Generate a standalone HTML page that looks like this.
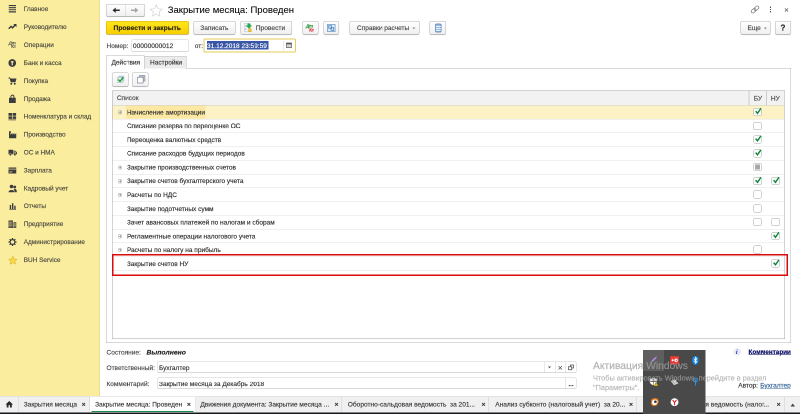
<!DOCTYPE html><html><head><meta charset="utf-8"><title>1C</title><style>
html,body{margin:0;padding:0;background:#fff;overflow:hidden;width:800px;height:414px}
#s{position:absolute;left:0;top:0;width:1600px;height:828px;transform:scale(.5);transform-origin:0 0;font-family:"Liberation Sans",sans-serif;font-size:12.8px;color:#4a4a4a;-webkit-text-stroke:.3px;overflow:hidden;background:#fff;will-change:transform;opacity:.9999}
#s div,#s span,#s svg{position:absolute;box-sizing:border-box;white-space:nowrap}
.sb{left:0;top:0;width:200.300px;height:792px;background:#fbed9e;border-right:2px solid #ecdd92}
.si{left:47.5px;height:16px;line-height:16px;font-size:12.85px;color:#4b4a40}
.btn{border:1.400px solid #b4b4b4;border-bottom-color:#979797;border-radius:3.500px;background:linear-gradient(#ffffff,#f0f0f0);box-shadow:0 1px 1.500px rgba(0,0,0,.16);text-align:center;color:#4a4a4a}
.t{height:16px;line-height:16px}
.inp{border:1px solid #cdcdcd;border-bottom-color:#b8b8b8;border-radius:4px;background:#fff}
.row{left:0;width:1343.500px;height:27.52px;border-bottom:1.500px solid #e1e1e1}
.rt{left:29px;top:5.900px;height:16px;line-height:16px;font-size:13.05px;color:#2e2e2e}
.cb{width:16px;height:16px;border:1.400px solid #a3a3a3;border-radius:2.500px;background:#fff;top:5.200px}
.pl{left:11.200px;top:9.500px;width:8.600px;height:8.600px;border:1px solid #9c9c9c;border-radius:5px}
.pl:before{content:"";position:absolute;left:1px;top:2.800px;width:4.600px;height:1px;background:#7d7d7d}
.pl:after{content:"";position:absolute;left:2.800px;top:1px;width:1px;height:4.600px;background:#7d7d7d}
.bt{height:16px;line-height:16px;top:801.200px;font-size:13.15px;color:#3a3a3a}
.bx{top:801px;height:16px;line-height:16px;font-size:13px;color:#333;font-weight:bold}
.bd{top:794px;width:1px;height:30px;background:#cfcfcf}
</style></head><body><div id="s">
<div class="sb"></div>
<svg style="left:17px;top:10.4px;overflow:visible" width="18" height="17" viewBox="0 0 18 17"><path d="M.500 0h14.500v2.200H.500zM.500 4.200h14.500v2.200H.500zM.500 8.400h14.500v2.200H.500zM.500 12.600h14.500v2.300H.500z" fill="#3c3c3e"/></svg>
<div class="si" style="top:10.4px">Главное</div>
<svg style="left:17px;top:46.2px;overflow:visible" width="18" height="17" viewBox="0 0 18 17"><path d="M0.500 11.500 L5 6.800 L8 9.600 L13 4.500" fill="none" stroke="#3c3c3e" stroke-width="2.900"/><path d="M9.500 2h6.500v6.500z" fill="#3c3c3e"/></svg>
<div class="si" style="top:46.2px">Руководителю</div>
<svg style="left:17px;top:82.0px;overflow:visible" width="18" height="17" viewBox="0 0 18 17"><text x="0.300" y="6.800" font-size="9" font-weight="bold" font-style="italic" fill="#3c3c3e" font-family="Liberation Sans" letter-spacing="-.3">Дт</text><text x="5.500" y="14.300" font-size="9" font-weight="bold" fill="#3c3c3e" font-family="Liberation Sans" letter-spacing="-.2">Кт</text></svg>
<div class="si" style="top:82.0px">Операции</div>
<svg style="left:17px;top:117.9px;overflow:visible" width="18" height="17" viewBox="0 0 18 17"><circle cx="7.500" cy="8" r="7.700" fill="#3c3c3e"/><path d="M4.800 4.300h5.400v2.500H8.700V12.500H6.300V6.800H4.800z" fill="#fbed9e"/></svg>
<div class="si" style="top:117.9px">Банк и касса</div>
<svg style="left:17px;top:153.7px;overflow:visible" width="18" height="17" viewBox="0 0 18 17"><path d="M0 1h3.200l.800 2H16l-2.200 7.500H4.500L2.200 3H0z" fill="#3c3c3e"/><circle cx="5.500" cy="13.500" r="1.900" fill="#3c3c3e"/><circle cx="12.500" cy="13.500" r="1.900" fill="#3c3c3e"/></svg>
<div class="si" style="top:153.7px">Покупка</div>
<svg style="left:17px;top:189.5px;overflow:visible" width="18" height="17" viewBox="0 0 18 17"><path d="M1 5.500h13.500V16H1z" fill="#3c3c3e"/><path d="M4.800 6V3.200a3 3 0 0 1 6 0V6" fill="none" stroke="#3c3c3e" stroke-width="1.900"/></svg>
<div class="si" style="top:189.5px">Продажа</div>
<svg style="left:17px;top:225.3px;overflow:visible" width="18" height="17" viewBox="0 0 18 17"><path d="M0 1h7v5.500H0zM8.200 1h7v5.500h-7zM0 7.700h7v5H0zM8.200 7.700h7v5h-7zM0 14h15.200v1.400H0z" fill="#3c3c3e"/></svg>
<div class="si" style="top:225.3px">Номенклатура и склад</div>
<svg style="left:17px;top:261.1px;overflow:visible" width="18" height="17" viewBox="0 0 18 17"><path d="M1 15.500V1.500h3.800V4.500H3.800v3.800l4-3.500v3.500l4-3.500v3.500l3.700-2.800V15.500z" fill="#3c3c3e"/></svg>
<div class="si" style="top:261.1px">Производство</div>
<svg style="left:17px;top:297.0px;overflow:visible" width="18" height="17" viewBox="0 0 18 17"><path d="M0 2.500h9.500v9H0zM10.500 4.500h3.500l3 3.500v3.500h-6.500z" fill="#3c3c3e"/><path d="M11.800 6h2l1.700 2.200h-3.700z" fill="#fbed9e"/><circle cx="3.800" cy="12.200" r="2.300" fill="#3c3c3e" stroke="#fbed9e" stroke-width=".8"/><circle cx="12.800" cy="12.200" r="2.300" fill="#3c3c3e" stroke="#fbed9e" stroke-width=".8"/></svg>
<div class="si" style="top:297.0px">ОС и НМА</div>
<svg style="left:17px;top:332.8px;overflow:visible" width="18" height="17" viewBox="0 0 18 17"><path d="M0 2h15.500v12H0z" fill="#3c3c3e"/><path d="M0 5.200h15.500" stroke="#d8cc85" stroke-width="1.700"/><path d="M2 9.500h6M2 11.800h4" stroke="#d8cc85" stroke-width="1"/></svg>
<div class="si" style="top:332.8px">Зарплата</div>
<svg style="left:17px;top:368.6px;overflow:visible" width="18" height="17" viewBox="0 0 18 17"><circle cx="6" cy="4" r="3.600" fill="#3c3c3e"/><path d="M0 15.500c0-6 12-6 12 0z" fill="#3c3c3e"/><circle cx="12.500" cy="5" r="2.800" fill="#3c3c3e"/><path d="M10.500 9.300c3.500-1.500 6.500.500 6 6.200h-3.500z" fill="#3c3c3e"/></svg>
<div class="si" style="top:368.6px">Кадровый учет</div>
<svg style="left:17px;top:404.4px;overflow:visible" width="18" height="17" viewBox="0 0 18 17"><path d="M2.500 6h2.800v8H2.500zM7 2.500h2.800V14H7zM11.500 7.500h2.800V14h-2.800zM1.500 14h13.500v1.300H1.500z" fill="#3c3c3e"/></svg>
<div class="si" style="top:404.4px">Отчеты</div>
<svg style="left:17px;top:440.2px;overflow:visible" width="18" height="17" viewBox="0 0 18 17"><path d="M0 1h9v15H0zM10 4.500h5.500V16H10z" fill="#3c3c3e"/><path d="M2.200 2.500v12.500M4.500 2.500v12.500M6.800 2.500v12.500M11.800 6v9M13.800 6v9" stroke="#cfc37c" stroke-width=".8"/><path d="M0 4.500h9M0 8h15.500M0 11.500h15.500" stroke="#cfc37c" stroke-width=".7"/></svg>
<div class="si" style="top:440.2px">Предприятие</div>
<svg style="left:17px;top:476.1px;overflow:visible" width="18" height="17" viewBox="0 0 18 17"><circle cx="8" cy="8" r="4.800" fill="none" stroke="#3c3c3e" stroke-width="2.400"/><path d="M8 0v16M0 8h16M2.300 2.300l11.400 11.400M13.700 2.300L2.300 13.700" stroke="#3c3c3e" stroke-width="2.500"/><circle cx="8" cy="8" r="3.500" fill="#fbed9e"/></svg>
<div class="si" style="top:476.1px">Администрирование</div>
<svg style="left:17px;top:511.9px;overflow:visible" width="18" height="17" viewBox="0 0 18 17"><path d="M8.700 0.500l2.500 5.400 5.700.700-4.200 3.900 1.200 5.800-5.200-3-5.200 3 1.200-5.800L.500 6.600l5.700-.700z" fill="#f8da45" stroke="#d9aa17" stroke-width="1"/></svg>
<div class="si" style="top:511.9px">BUH Service</div>
<div class="btn" style="left:212px;top:7.500px;width:78px;height:25.500px"></div>
<div style="left:251px;top:9px;width:1px;height:23px;background:#d0d0d0"></div>
<svg style="left:225.300px;top:14.600px" width="15" height="11" viewBox="0 0 15 11"><path d="M0 5.500L6.500 0v3.900H14.500v3.200H6.500V11z" fill="#2c2c2c"/></svg>
<svg style="left:262px;top:14.600px" width="15" height="11" viewBox="0 0 15 11"><path d="M14.500 5.500L8 0v4.100H0v2.800H8V11z" fill="#a3a3a3"/></svg>
<svg style="left:299px;top:8px" width="27" height="25" viewBox="0 0 27 25"><path d="M13.5 1.5l3.5 8 8.5.8-6.4 5.7 1.9 8.4-7.5-4.5L6 24.4l1.9-8.4L1.5 10.3l8.5-.8z" fill="#fff" stroke="#cdcdcd" stroke-width="1.200"/></svg>
<div style="left:335.5px;top:8px;height:24px;line-height:24px;font-size:19.05px;color:#000;-webkit-text-stroke:.1px">Закрытие месяца: Проведен</div>
<svg style="left:1500px;top:9px" width="20" height="20" viewBox="0 0 20 20"><g fill="none" stroke="#6e6e6e" stroke-width="1.300" transform="rotate(-40 10 10)"><rect x="1" y="6.800" width="10.500" height="6.400" rx="3.200"/><rect x="8.500" y="6.800" width="10.500" height="6.400" rx="3.200"/></g></svg>
<div style="left:1539.700px;top:13.200px;width:2.600px;height:2.600px;background:#4a4a4a"></div><div style="left:1539.700px;top:17.700px;width:2.600px;height:2.600px;background:#4a4a4a"></div><div style="left:1539.700px;top:22.100px;width:2.600px;height:2.600px;background:#4a4a4a"></div>
<svg style="left:1569px;top:15.500px" width="8" height="8" viewBox="0 0 8 8"><path d="M.700.700l6.600 6.600M7.300.700L.700 7.300" stroke="#5a5a5a" stroke-width="1.400"/></svg>
<div class="btn" style="left:212px;top:42px;width:166px;height:27px;background:linear-gradient(#ffe61e,#f8cf00);border-color:#d9b400 #d2ac00 #b89600"></div>
<div class="t" style="left:227px;top:47.5px;font-size:13.45px;font-weight:bold;color:#2e2a12">Провести и закрыть</div>
<div class="btn" style="left:387px;top:42px;width:84px;height:27px"></div>
<div class="t" style="left:400.500px;top:47.5px;font-size:13.2px">Записать</div>
<div class="btn" style="left:480.500px;top:42px;width:103.500px;height:27px"></div>
<svg style="left:487.500px;top:46px" width="17" height="18" viewBox="0 0 17 18"><path d="M.600.600h10v16.500h-10z" fill="#f3f5f8" stroke="#b3bdc9" stroke-width="1"/><path d="M2.200 4.500h3.500M2.200 7.500h3.500M2.200 10.500h3.500M2.200 13.500h3.500" stroke="#a9b9cc" stroke-width="1.100"/><path d="M7.500 1.500h5v4h3l-5.500 5.300-5.500-5.300h3z" fill="#22ad4d" stroke="#129040" stroke-width=".7"/><path d="M9.300 11.500h5.300v5.700H9.300z" fill="#f2c424" stroke="#c9980f" stroke-width=".9"/></svg>
<div class="t" style="left:511.500px;top:47.5px;font-size:13.3px">Провести</div>
<div class="btn" style="left:605px;top:42px;width:32px;height:27px"></div>
<div style="left:612px;top:46.500px;font-size:9px;font-weight:bold;font-style:italic;color:#2a9636;height:10px;line-height:10px;letter-spacing:-.4px">Дт</div><div style="left:618.500px;top:55px;font-size:8.800px;font-weight:bold;color:#e0202a;height:10px;line-height:10px;letter-spacing:-.3px">Кт</div>
<div class="btn" style="left:647px;top:42px;width:31px;height:27px"></div>
<svg style="left:653.500px;top:47.500px" width="17" height="16" viewBox="0 0 17 16"><rect x=".8" y=".8" width="15.400" height="14.400" fill="#dfeaf6" stroke="#6a9ccb" stroke-width="1.500"/><path d="M3.500 3h5.500v6H3.500zM8 7h5.500v6H8z" fill="#b9d4ee" stroke="#3b74b3" stroke-width="1.200"/></svg>
<div class="btn" style="left:699px;top:42px;width:140px;height:27px"></div>
<div class="t" style="left:714px;top:47.5px;font-size:13.05px">Справки расчеты</div>
<svg style="left:825px;top:54.500px" width="5.600" height="4" viewBox="0 0 7 5"><path d="M0 0h7L3.500 4.500z" fill="#808080"/></svg>
<div class="btn" style="left:859px;top:42px;width:33px;height:27px"></div>
<svg style="left:869.500px;top:47.300px" width="13" height="18" viewBox="0 0 13 18"><rect x=".8" y=".8" width="11.400" height="16.400" rx="2.200" fill="#8fb4e0" stroke="#4a78b0" stroke-width="1.300"/><path d="M1.500 5.700h10M1.500 9.700h10M1.500 13.700h10" stroke="#f4f8fd" stroke-width="1.900"/></svg>
<div class="btn" style="left:1481px;top:42px;width:60px;height:27px"></div>
<div class="t" style="left:1495px;top:47.5px;font-size:13.05px">Еще</div>
<svg style="left:1527.500px;top:54.500px" width="5.600" height="4" viewBox="0 0 7 5"><path d="M0 0h7L3.500 4.500z" fill="#808080"/></svg>
<div class="btn" style="left:1550px;top:42px;width:32px;height:27px"></div>
<div class="t" style="left:1550px;top:47.5px;width:32px;text-align:center;font-size:16px;font-weight:bold;color:#222">?</div>
<div class="t" style="left:213px;top:83.5px;font-size:13.05px">Номер:</div>
<div class="inp" style="left:263px;top:79px;width:115px;height:25px"></div>
<div class="t" style="left:265.800px;top:83.5px;font-size:13.2px;color:#333">00000000012</div>
<div class="t" style="left:389.500px;top:83.5px;font-size:13.05px">от:</div>
<div class="inp" style="left:407px;top:76.500px;width:185px;height:28.500px;border:2.200px solid #e6cc55;border-radius:3px"></div>
<div style="left:413.500px;top:82px;width:123.500px;height:17px;background:#3855a6"></div>
<div class="t" style="left:414px;top:83.5px;font-size:13.05px;color:#fff">31.12.2018 23:59:59</div>
<div style="left:566px;top:82px;width:1px;height:19px;background:#d5d5d5"></div>
<svg style="left:572px;top:84px" width="12" height="12" viewBox="0 0 12 12"><path d="M1 2h10v9H1z" fill="#fff" stroke="#555" stroke-width="1.4"/><path d="M1 2h10v3H1z" fill="#555"/><path d="M3 7h2M7 7h2M3 9h2M7 9h2" stroke="#555" stroke-width="1"/></svg>
<div style="left:212px;top:136.300px;width:1369.500px;height:550px;border:1.500px solid #b6b6b6;background:#fff"></div>
<div style="left:288px;top:112px;width:85px;height:25px;border:1.500px solid #bcbcbc;border-left:none;border-bottom:none;background:#ececec"></div>
<div style="left:212px;top:111.300px;width:77px;height:27px;border:1.500px solid #b6b6b6;border-bottom:none;background:#fff"></div>
<div class="t" style="left:223px;top:116.500px;font-size:13.05px;color:#333">Действия</div>
<div class="t" style="left:300px;top:116.500px;font-size:13.05px;color:#333">Настройки</div>
<div class="btn" style="left:224px;top:144.500px;width:33px;height:28px"></div>
<svg style="left:232.500px;top:149.500px" width="17" height="17" viewBox="0 0 17 17"><path d="M5 1.500h10.500v10l-3 3.500H2V5z" fill="#b9c6d6"/><path d="M2 5h10.500v10.500H2z" fill="#eef2f7" stroke="#9fb0c4" stroke-width="1"/><path d="M3.500 9l3.500 3.800 6.500-8.300" fill="none" stroke="#17a02f" stroke-width="2.800"/></svg>
<div class="btn" style="left:264px;top:144.500px;width:33px;height:28px"></div>
<svg style="left:273.500px;top:150px" width="17" height="17" viewBox="0 0 17 17"><rect x="4.500" y=".700" width="11.500" height="11.500" fill="#b3bec9" stroke="#909ca8" stroke-width="1.200"/><rect x=".800" y="4.500" width="11.500" height="11.500" fill="#fff" stroke="#7f8a96" stroke-width="1.400"/></svg>
<div style="left:223.700px;top:180.700px;width:1346.300px;height:497px;border:1.500px solid #a6a6a6;background:#fff;overflow:hidden">
<div style="left:0;top:0;width:1343.500px;height:29.300px;background:#f2f2f2;border-bottom:1.500px solid #cccccc"></div>
<div class="t" style="left:9px;top:6.500px;font-size:13.05px;color:#4a4a4a">Список</div>
<div style="left:1272.800px;top:0;width:1.500px;height:29px;background:#cdcdcd"></div><div style="left:1307.500px;top:0;width:1.500px;height:29px;background:#cdcdcd"></div>
<div class="t" style="left:1274px;width:34px;text-align:center;top:7px;font-size:13.1px;color:#4a4a4a">БУ</div>
<div class="t" style="left:1308.500px;width:35px;text-align:center;top:7px;font-size:13.1px;color:#4a4a4a">НУ</div>
<div class="row" style="top:29.30px;background:#fdf2c6;">
<div style="left:27px;top:0;width:159px;height:26.4px;background:#fce8a2"></div>
<div class="pl"></div>
<div class="rt">Начисление амортизации</div>
<div class="cb" style="left:1282.5px"><svg style="left:1px;top:-2px" width="15" height="15" viewBox="0 0 15 15"><path d="M2.300 7.300l3.700 4.300L13 1.500" fill="none" stroke="#0b8838" stroke-width="2.900"/></svg></div>

</div>
<div class="row" style="top:56.82px;">
<div class="rt">Списание резерва по переоценке ОС</div>
<div class="cb" style="left:1282.5px"></div>

</div>
<div class="row" style="top:84.34px;">
<div class="rt">Переоценка валютных средств</div>
<div class="cb" style="left:1282.5px"><svg style="left:1px;top:-2px" width="15" height="15" viewBox="0 0 15 15"><path d="M2.300 7.300l3.700 4.300L13 1.500" fill="none" stroke="#0b8838" stroke-width="2.900"/></svg></div>

</div>
<div class="row" style="top:111.86px;">
<div class="rt">Списание расходов будущих периодов</div>
<div class="cb" style="left:1282.5px"><svg style="left:1px;top:-2px" width="15" height="15" viewBox="0 0 15 15"><path d="M2.300 7.300l3.700 4.300L13 1.500" fill="none" stroke="#0b8838" stroke-width="2.900"/></svg></div>

</div>
<div class="row" style="top:139.38px;">
<div class="pl"></div>
<div class="rt">Закрытие производственных счетов</div>
<div class="cb" style="left:1282.5px"><div style="left:2px;top:2px;width:10px;height:10px;background:#a8a8a8"></div></div>

</div>
<div class="row" style="top:166.90px;">
<div class="pl"></div>
<div class="rt">Закрытие счетов бухгалтерского учета</div>
<div class="cb" style="left:1282.5px"><svg style="left:1px;top:-2px" width="15" height="15" viewBox="0 0 15 15"><path d="M2.300 7.300l3.700 4.300L13 1.500" fill="none" stroke="#0b8838" stroke-width="2.900"/></svg></div>
<div class="cb" style="left:1318px"><svg style="left:1px;top:-2px" width="15" height="15" viewBox="0 0 15 15"><path d="M2.300 7.300l3.700 4.300L13 1.500" fill="none" stroke="#0b8838" stroke-width="2.900"/></svg></div>
</div>
<div class="row" style="top:194.42px;">
<div class="pl"></div>
<div class="rt">Расчеты по НДС</div>
<div class="cb" style="left:1282.5px"></div>

</div>
<div class="row" style="top:221.94px;">
<div class="rt">Закрытие подотчетных сумм</div>
<div class="cb" style="left:1282.5px"></div>

</div>
<div class="row" style="top:249.46px;">
<div class="rt">Зачет авансовых платежей по налогам и сборам</div>
<div class="cb" style="left:1282.5px"></div>
<div class="cb" style="left:1318px"></div>
</div>
<div class="row" style="top:276.98px;">
<div class="pl"></div>
<div class="rt">Регламентные операции налогового учета</div>

<div class="cb" style="left:1318px"><svg style="left:1px;top:-2px" width="15" height="15" viewBox="0 0 15 15"><path d="M2.300 7.300l3.700 4.300L13 1.500" fill="none" stroke="#0b8838" stroke-width="2.900"/></svg></div>
</div>
<div class="row" style="top:304.50px;">
<div class="pl"></div>
<div class="rt">Расчеты по налогу на прибыль</div>
<div class="cb" style="left:1282.5px"></div>

</div>
<div class="row" style="top:332.02px;">
<div class="rt">Закрытие счетов НУ</div>

<div class="cb" style="left:1318px"><svg style="left:1px;top:-2px" width="15" height="15" viewBox="0 0 15 15"><path d="M2.300 7.300l3.700 4.300L13 1.500" fill="none" stroke="#0b8838" stroke-width="2.900"/></svg></div>
</div>
</div>
<div style="left:224px;top:508px;width:1352px;height:43.500px;border:3.700px solid #dc0a0a"></div>
<div class="t" style="left:213px;top:697px;font-size:13.05px">Состояние:</div>
<div class="t" style="left:293px;top:697px;font-size:13.600px;font-weight:bold;font-style:italic;color:#222">Выполнено</div>
<div class="t" style="left:213px;top:728px;font-size:13.05px">Ответственный:</div>
<div class="inp" style="left:313.500px;top:722.800px;width:839px;height:23.500px"></div>
<div class="t" style="left:318px;top:728px;font-size:13.05px;color:#333">Бухгалтер</div>
<div style="left:1088.500px;top:723.800px;width:1px;height:21.500px;background:#cfcfcf"></div><div style="left:1110px;top:723.800px;width:1px;height:21.500px;background:#cfcfcf"></div><div style="left:1130px;top:723.800px;width:1px;height:21.500px;background:#cfcfcf"></div>
<svg style="left:1095.800px;top:732.500px" width="6" height="4.300" viewBox="0 0 7 5"><path d="M0 0h7L3.500 4.500z" fill="#555"/></svg>
<svg style="left:1116.200px;top:730.600px" width="9" height="9" viewBox="0 0 9 9"><path d="M1 1l7 7M8 1L1 8" stroke="#4a4a4a" stroke-width="1.300"/></svg>
<svg style="left:1135.500px;top:728.500px" width="12" height="12" viewBox="0 0 12 12"><path d="M4.500 1h6.500v6H4.500z" fill="#fff" stroke="#4a4a4a" stroke-width="1.400"/><path d="M1 4.500h6.500v6H1z" fill="#fff" stroke="#4a4a4a" stroke-width="1.400"/></svg>
<div class="t" style="left:213px;top:759.500px;font-size:13.05px">Комментарий:</div>
<div class="inp" style="left:313.500px;top:754.800px;width:839px;height:23.500px"></div>
<div class="t" style="left:318px;top:759.500px;font-size:13.05px;color:#333">Закрытие месяца за Декабрь 2018</div>
<div style="left:1130px;top:755.800px;width:1px;height:21.500px;background:#cfcfcf"></div>
<div class="t" style="left:1137px;top:760px;font-size:12px;color:#444;font-weight:bold">...</div>
<svg style="left:1467px;top:697px" width="15" height="14" viewBox="0 0 15 14"><ellipse cx="7.500" cy="7" rx="7" ry="6.500" fill="#eceef6" stroke="#d6d9e6" stroke-width=".8"/><text x="4.800" y="11.300" font-size="12.500" font-weight="bold" font-style="italic" fill="#1c1cd8" font-family="Liberation Serif">i</text></svg>
<div class="t" style="left:1497px;top:696px;font-size:12.6px;font-weight:bold;color:#0a0a66;text-decoration:underline">Комментарии</div>
<div class="t" style="left:1476.500px;top:763px;font-size:13.05px;color:#333">Автор:</div>
<div class="t" style="left:1520.500px;top:763px;font-size:13.05px;color:#2f5f94;text-decoration:underline">Бухгалтер</div>
<div style="left:0;top:792px;width:1600px;height:33px;background:#f0f0f0;border-top:1px solid #d4d4d4"></div>
<div style="left:0;top:824.500px;width:1600px;height:4px;background:#15171c"></div>
<svg style="left:11px;top:801.500px" width="15" height="13" viewBox="0 0 16 14" preserveAspectRatio="none"><path d="M8 0L0 7.500h2.500V14h4V9h3v5h4V7.500H16z" fill="#2b2b2b"/></svg>
<div class="bd" style="left:36.700px"></div>
<div class="bt" style="left:47.4px">Закрытия месяца</div><div class="bx" style="left:163.39999999999998px">×</div>
<div class="bd" style="left:178.5px"></div>
<div style="left:179.500px;top:793px;width:212px;height:32px;background:#fff"></div>
<div style="left:182.500px;top:821.800px;width:204px;height:2.300px;background:#1b8a4a"></div>
<div class="bt" style="left:190.2px">Закрытие месяца: Проведен</div><div class="bx" style="left:374.0px">×</div>
<div class="bd" style="left:391.2px"></div>
<div class="bt" style="left:400.7px">Движения документа: Закрытие месяца ...</div><div class="bx" style="left:669.2px">×</div>
<div class="bd" style="left:683px"></div>
<div class="bt" style="left:695.6px">Оборотно-сальдовая ведомость&nbsp; за 201...</div><div class="bx" style="left:963.2px">×</div>
<div class="bd" style="left:977.2px"></div>
<div class="bt" style="left:990.4px">Анализ субконто (налоговый учет)&nbsp; за 20...</div><div class="bx" style="left:1258.2px">×</div>
<div class="bd" style="left:1273px"></div>
<div class="bt" style="left:1289px">Оборотно-сальдовая ведомость (налог...</div><div class="bx" style="left:1553.6000000000001px">×</div>
<div class="bd" style="left:1568.6px"></div>
<svg style="left:1580.500px;top:806.500px" width="9" height="6" viewBox="0 0 9 6"><path d="M0 6h9L4.500 0z" fill="#444"/></svg>
<div style="left:1286.400px;top:700.400px;width:125px;height:128px;background:#494949"></div>
<div style="left:1286.400px;top:700.400px;width:41.500px;height:41.600px;background:#5f5f5f"></div>
<svg style="left:1286px;top:700px" width="126" height="128" viewBox="1286 700 126 128"><path d="M1301.500 725c2-5 7-10 12.500-12.200c-1.500 5.500-6.500 10.500-12.500 12.200z" fill="#9b74cf"/><path d="M1303.500 723L1312.500 714" stroke="#c9acee" stroke-width="1.100" stroke-linecap="round"/><rect x="1340.400" y="712.400" width="17.400" height="16.200" fill="#ee3b36"/><circle cx="1352.200" cy="720.500" r="3.400" fill="#fff"/><circle cx="1345.300" cy="720.500" r="2" fill="#fff"/><circle cx="1352.800" cy="720.500" r="1.300" fill="#ee3b36"/><ellipse cx="1390.900" cy="720.700" rx="6.600" ry="9" fill="#1487ee"/><path d="M1387.600 717.200l6.400 6.400-3.200 3v-12l3.200 3-6.400 6.400" fill="none" stroke="#fff" stroke-width="1.400"/><path d="M1306.500 755.400c2.500 1.600 4.800 2.200 6.900 2.200v5.400c0 3.600-3 6-6.900 7.400-3.900-1.400-6.900-3.800-6.900-7.400v-5.400c2.100 0 4.400-.600 6.900-2.200z" fill="#fff"/><path d="M1306.500 756.500v13M1300.500 762.300h12.500" stroke="#444" stroke-width="1.100"/><path d="M1311.700 763.600l4.300 8h-8.600z" fill="#f5c518"/><path d="M1311.700 766.300v3" stroke="#3a3a3a" stroke-width="1.200"/><path d="M1342 762.500l8.500-3.500 6.500 8-9 3.500z" fill="#a9a9a9"/><path d="M1342 762.500l8.500-3.500M1343.800 764.800l8.500-3.500M1345.600 767l8.500-3.500M1347.300 769.200l8.500-3.500" stroke="#e4e4e4" stroke-width="1.300"/><circle cx="1391" cy="759.800" r="3.700" fill="none" stroke="#2a8fdd" stroke-width="2.400"/><path d="M1391 763.500v7.500" stroke="#2a8fdd" stroke-width="2.400"/><path d="M1303 798.500l6-2.500 7 1.500 1.500 7-4 6.500-7 1.500-5-4.500z" fill="#e77f1c"/><path d="M1305 800.500l5-1.500 4.500 1.500.500 4.500-3 4.500-5 .500-3-3z" fill="#fff"/><circle cx="1310.800" cy="803.400" r="2.700" fill="#3b3b45"/><circle cx="1349.100" cy="804.300" r="7.900" fill="#fff"/><path d="M1345.200 799.800l3.900 5 3.900-5M1349.100 804.800v5.600" fill="none" stroke="#e0151a" stroke-width="2"/></svg>
<div class="t" style="left:1186px;top:717.700px;height:26px;line-height:26px;font-size:20.600px;color:rgba(160,160,160,.78)">Активация Windows</div>
<div class="t" style="left:1186px;top:747.500px;font-size:14.700px;color:rgba(165,165,165,.72)">Чтобы активировать Windows, перейдите в раздел</div>
<div class="t" style="left:1186px;top:766.500px;font-size:14.700px;color:rgba(165,165,165,.72)">"Параметры".</div>
</div></body></html>
